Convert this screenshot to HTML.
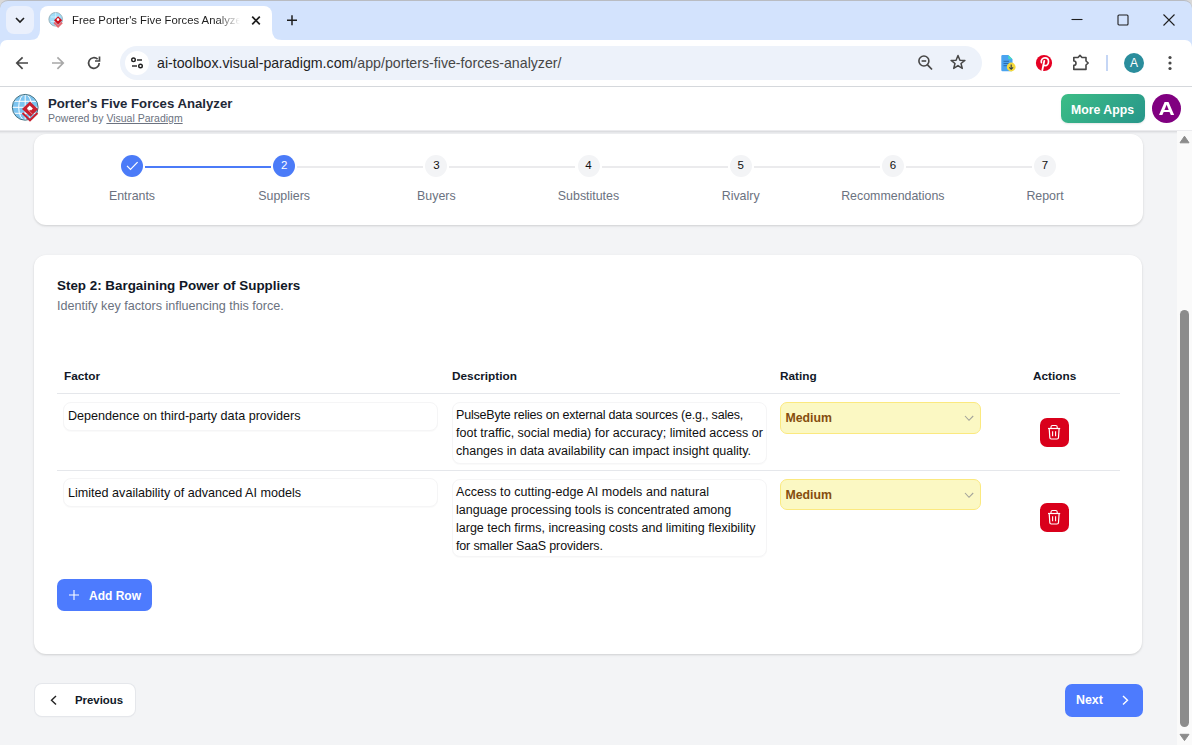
<!DOCTYPE html>
<html><head><meta charset="utf-8">
<style>
*{box-sizing:border-box;margin:0;padding:0}
html,body{width:1192px;height:745px;overflow:hidden;font-family:"Liberation Sans",sans-serif;background:#f3f4f6;position:relative}
.abs{position:absolute}
.t{position:absolute;line-height:1;white-space:nowrap}
svg{position:absolute;overflow:visible}
#tabstrip{left:0;top:0;width:1192px;height:48px;background:#d3e3fd;border-top:1px solid #b9bcc2;border-radius:8px 8px 0 0}
#corner{left:0;top:0;width:1192px;height:10px;background:#d9d9d9}
#toolbar{left:0;top:40px;width:1192px;height:46px;background:#fff;border-radius:7px 7px 0 0}
#tbline{left:0;top:86px;width:1192px;height:1px;background:#d5d8dc}
#apphdr{left:0;top:87px;width:1192px;height:43px;background:#fff}
#hdrsh{left:0;top:130px;width:1192px;height:4px;background:linear-gradient(#ebebee 0,#ebebee 1px,#dcdde0 1px,#dcdde0 2px,#e7e8eb 2px,#e7e8eb 3px,#eff0f2 3px)}
.card{background:#fff;border-radius:12px;box-shadow:0 1px 3px rgba(0,0,0,.10),0 1px 2px rgba(0,0,0,.06)}
#scroll{left:1177px;top:131px;width:15px;height:614px;background:#fafafa}
.step{position:absolute;top:155px;width:22px;height:22px;border-radius:50%}
.step.done{background:#4b7bf8}
.step.todo{background:#f3f4f6}
.snum{position:absolute;top:160.4px;width:22px;text-align:center;font-size:11.5px;line-height:1}
.slabel{position:absolute;top:189.5px;font-size:12.4px;line-height:1;color:#6b7280;text-align:center;width:160px;white-space:nowrap}
.sline{position:absolute;top:166px;height:2px;background:#ebebed}
.th{position:absolute;top:370.6px;font-size:11.8px;line-height:1;font-weight:bold;color:#111827;white-space:nowrap}
.inp{position:absolute;background:#fff;border-radius:8px;border:1px solid #f5f5f6;box-shadow:0 1px 1px rgba(0,0,0,.025)}
.ftxt{position:absolute;font-size:12.6px;line-height:1;color:#0f0f10;white-space:nowrap}
.dtxt{position:absolute;font-size:12.5px;line-height:18px;color:#0f0f10;white-space:nowrap}
.sel{position:absolute;background:#fbf8c3;border:1px solid #fbe97f;border-radius:7px}
.mtxt{position:absolute;font-size:12.3px;line-height:1;color:#854d0e;font-weight:bold;white-space:nowrap}
.del{position:absolute;width:29px;height:29px;background:#d9001b;border-radius:7px}
.hline{position:absolute;left:57px;width:1063px;height:1px;background:#e5e7eb}
</style></head><body>
<!-- Browser chrome -->
<div id="corner" class="abs"></div>
<div id="tabstrip" class="abs"></div>
<div class="abs" style="left:6px;top:6px;width:28px;height:28px;border-radius:8px;background:#eaf0fc"></div>
<svg style="left:0;top:0" width="40" height="40"><path d="M16 18 L20 22 L24 18" fill="none" stroke="#1f1f1f" stroke-width="1.6"/></svg>
<!-- active tab -->
<div class="abs" style="left:40px;top:6px;width:232px;height:34px;background:#fff;border-radius:8px 8px 0 0"></div>
<svg style="left:30px;top:30px" width="10" height="10"><path d="M0 10 Q10 10 10 0 L10 10 Z" fill="#fff"/></svg>
<svg style="left:272px;top:30px" width="10" height="10"><path d="M0 0 Q0 10 10 10 L0 10 Z" fill="#fff"/></svg>
<svg style="left:46px;top:10px" width="20" height="20"><circle cx="9.7" cy="9.3" r="6.8" fill="#9fdcf8" stroke="#9ab3bd" stroke-width="1"/><path d="M5 7 H14 M5 11.5 H11 M9.7 2.5 V16" stroke="#d8f1fc" stroke-width=".8"/><path d="M8.2 12.5 L12.1 16.5 L16 12.5" fill="none" stroke="#e36a73" stroke-width="2.2"/><path d="M12.1 6.3 L16.2 10.3 L12.1 14.4 L8 10.3 Z" fill="#d0101e"/><circle cx="12" cy="9.6" r="1.3" fill="#fff"/></svg>
<div class="t" style="left:72px;top:15.4px;font-size:11.3px;color:#1f1f1f;width:172px;overflow:hidden;-webkit-mask-image:linear-gradient(90deg,#000 145px,transparent 168px)">Free Porter's Five Forces Analyzer</div>
<svg style="left:250px;top:14px" width="12" height="12"><path d="M2.2 2.7 L9.8 10.3 M9.8 2.7 L2.2 10.3" stroke="#1f1f1f" stroke-width="1.7"/></svg>
<svg style="left:285px;top:13px" width="14" height="14"><path d="M7 2.3 V12.3 M2 7.3 H12" stroke="#1f1f1f" stroke-width="1.5"/></svg>
<!-- window controls -->
<svg style="left:1071px;top:14px" width="12" height="12"><path d="M0.5 5.5 H11.5" stroke="#1f1f1f" stroke-width="1.1"/></svg>
<svg style="left:1117px;top:14px" width="12" height="12"><rect x="1" y="1" width="10" height="10" fill="none" stroke="#1f1f1f" stroke-width="1.1" rx="1"/></svg>
<svg style="left:1163px;top:14px" width="12" height="12"><path d="M0.5 0.5 L11.5 11.5 M11.5 0.5 L0.5 11.5" stroke="#1f1f1f" stroke-width="1.1"/></svg>

<div id="toolbar" class="abs"></div>
<div id="tbline" class="abs"></div>
<!-- nav icons -->
<svg style="left:14px;top:55px" width="16" height="16"><path d="M14 8 H2.8 M8.6 2.3 L2.8 8 L8.6 13.8" fill="none" stroke="#474747" stroke-width="1.7"/></svg>
<svg style="left:50px;top:55px" width="16" height="16"><path d="M2 8 H13.2 M7.4 2.3 L13.2 8 L7.4 13.8" fill="none" stroke="#a8a8a8" stroke-width="1.7"/></svg>
<svg style="left:86px;top:55px" width="16" height="16"><path d="M13.2 8 A5.3 5.3 0 1 1 11.6 4.2" fill="none" stroke="#474747" stroke-width="1.7"/><path d="M13.5 1.5 V6 H9" fill="none" stroke="#474747" stroke-width="1.7"/></svg>
<!-- omnibox -->
<div class="abs" style="left:120px;top:46px;width:862px;height:34px;border-radius:17px;background:#edf2fa"></div>
<div class="abs" style="left:125px;top:51px;width:24px;height:24px;border-radius:12px;background:#fff"></div>
<svg style="left:125px;top:51px" width="24" height="24"><circle cx="8.5" cy="8.8" r="1.8" fill="none" stroke="#1f1f1f" stroke-width="1.4"/><path d="M12 9 H17" stroke="#1f1f1f" stroke-width="1.4"/><circle cx="15.5" cy="15" r="1.8" fill="none" stroke="#1f1f1f" stroke-width="1.4"/><path d="M7 15 H12" stroke="#1f1f1f" stroke-width="1.4"/></svg>
<div class="t" style="left:157px;top:55.7px;font-size:14.2px;color:#1f1f1f">ai-toolbox.visual-paradigm.com<span style="color:#474747">/app/porters-five-forces-analyzer/</span></div>
<svg style="left:916px;top:54px" width="18" height="18"><circle cx="7.9" cy="7" r="5" fill="none" stroke="#474747" stroke-width="1.6"/><path d="M5.6 7 H10.2" stroke="#474747" stroke-width="1.6"/><path d="M11.5 10.8 L16 15.5" stroke="#474747" stroke-width="1.8"/></svg>
<svg style="left:949px;top:53px" width="18" height="18"><path d="M9 2.5 L10.9 7.2 L15.9 7.4 L12 10.5 L13.3 15.4 L9 12.6 L4.7 15.4 L6 10.5 L2.1 7.4 L7.1 7.2 Z" fill="none" stroke="#474747" stroke-width="1.5" stroke-linejoin="round"/></svg>
<!-- extensions -->
<svg style="left:999.5px;top:53px" width="20" height="20"><path d="M2.5 2 H8.3 L12.5 6.2 V17 A1.2 1.2 0 0 1 11.3 18.2 H2.5 A1.2 1.2 0 0 1 1.3 17 V3.2 A1.2 1.2 0 0 1 2.5 2 Z" fill="#4aa3f0"/><path d="M8.3 2 L12.5 6.2 H8.3 Z" fill="#45dcc3"/><path d="M3.5 8.3 H9 M3.5 10.5 H9 M3.5 12.7 H7" stroke="#2b6cb0" stroke-width="1"/><circle cx="11.2" cy="14" r="4.4" fill="#f5d93a"/><path d="M11.2 11.6 V16.2 M9.3 14.4 L11.2 16.3 L13.1 14.4" fill="none" stroke="#2d3b4a" stroke-width="1.1"/></svg>
<svg style="left:1034px;top:53px" width="20" height="20"><circle cx="10" cy="10" r="8.1" fill="#e60023"/><path d="M7.4 9.6 C6.6 7 8.6 4.9 11 4.9 C13.2 4.9 14.5 6.4 14.5 8.5 C14.5 10.9 13.1 12.7 11.1 12.7 C10.2 12.7 9.5 12.1 9.5 12.1" fill="none" stroke="#fff" stroke-width="1.7" stroke-linecap="round"/><path d="M10.3 7.8 L8.3 17.2" fill="none" stroke="#fff" stroke-width="1.8" stroke-linecap="round"/></svg>
<svg style="left:1070px;top:53px" width="20" height="20"><path d="M3.8 4.5 H8 L10 2.4 L12 4.5 H16 V8 L18.2 10 L16 12 V16.4 H3.8 V12.4 A2.2 2.2 0 0 0 3.8 8 Z" fill="none" stroke="#474747" stroke-width="1.6" stroke-linejoin="round"/></svg>
<div class="abs" style="left:1106px;top:55px;width:2px;height:16px;background:#c5d6f5"></div>
<div class="abs" style="left:1124px;top:53px;width:20px;height:20px;border-radius:50%;background:#2a8d9c;color:#fff;font-size:12px;text-align:center;line-height:20px">A</div>
<svg style="left:1162px;top:53px" width="16" height="20"><circle cx="8" cy="4.5" r="1.6" fill="#474747"/><circle cx="8" cy="10" r="1.6" fill="#474747"/><circle cx="8" cy="15.5" r="1.6" fill="#474747"/></svg>

<!-- app header -->
<div id="apphdr" class="abs"></div>
<div id="hdrsh" class="abs"></div>
<svg style="left:10px;top:92px" width="32" height="32"><defs><clipPath id="gc"><circle cx="15.2" cy="15.3" r="12.6"/></clipPath></defs><circle cx="15.2" cy="15.3" r="12.6" fill="#7cc4f0"/><g clip-path="url(#gc)" stroke="#fff" stroke-width="1" fill="none"><path d="M15.2 2 V29 M2 15.3 H29 M2 9.3 H29 M2 21.3 H29"/><ellipse cx="15.2" cy="15.3" rx="6.5" ry="13"/></g><circle cx="15.2" cy="15.3" r="12.9" fill="none" stroke="#3f6f80" stroke-width="1"/><path d="M20 9.5 L28 17.2 L20.5 24.7 L12 17 Z" fill="#c8202f"/><path d="M19.7 13.4 L22.9 16.6 L21 18.5 L20.2 17.7 L19.2 18.7 L16.9 16.3 Z" fill="#fff"/><path d="M17.4 17.2 L22.6 22.4" stroke="#f3c9cc" stroke-width=".6"/><path d="M12.5 21 L20 28.3 L27.5 21" fill="none" stroke="#c8202f" stroke-width="2"/></svg>
<div class="t" style="left:48px;top:96.8px;font-size:13.2px;font-weight:bold;color:#1f2937">Porter's Five Forces Analyzer</div>
<div class="t" style="left:48px;top:112.9px;font-size:10.5px;color:#6b7280">Powered by <span style="text-decoration:underline">Visual Paradigm</span></div>
<div class="abs" style="left:1061px;top:94px;width:84px;height:29px;border-radius:7px;background:linear-gradient(135deg,#3cbd86,#27968a);box-shadow:0 1px 2px rgba(0,0,0,.1)"></div>
<div class="t" style="left:1071px;top:103.8px;font-size:12.3px;font-weight:bold;color:#fff">More Apps</div>
<div class="abs" style="left:1152px;top:94px;width:29px;height:29px;border-radius:50%;background:#800080"></div>
<div class="t" style="left:1152px;top:99px;width:29px;text-align:center;font-size:19px;font-weight:bold;color:#fff;transform:scaleX(1.18)">A</div>

<div id="scroll" class="abs"></div>
<svg style="left:1177px;top:131px" width="15" height="20"><path d="M3 11.8 L7.5 5.2 L12 11.8 Z" fill="#8b8b8b" stroke="#8b8b8b" stroke-width="1" stroke-linejoin="round"/></svg>
<div class="abs" style="left:1180px;top:310px;width:9px;height:417px;border-radius:4.5px;background:#8c8c8c"></div>
<svg style="left:1177px;top:728px" width="15" height="17"><path d="M3 6.3 L7.5 12.6 L12 6.3 Z" fill="#8b8b8b" stroke="#8b8b8b" stroke-width="1" stroke-linejoin="round"/></svg>

<!-- stepper card -->
<div class="abs card" style="left:34px;top:134px;width:1109px;height:91px"></div>
<div class="sline" style="left:145.00px;width:126.17px;background:#4b7bf8"></div>
<div class="sline" style="left:297.17px;width:126.17px"></div>
<div class="sline" style="left:449.33px;width:126.17px"></div>
<div class="sline" style="left:601.50px;width:126.17px"></div>
<div class="sline" style="left:753.67px;width:126.17px"></div>
<div class="sline" style="left:905.83px;width:126.17px"></div>
<div class="step done" style="left:121.00px"><svg style="left:0;top:0" width="22" height="22"><path d="M6 10.8 L9.5 14.4 L16.6 7.2" fill="none" stroke="#fff" stroke-width="1.2"/></svg></div>
<div class="step done" style="left:273.17px"></div>
<div class="step todo" style="left:425.33px"></div>
<div class="step todo" style="left:577.50px"></div>
<div class="step todo" style="left:729.67px"></div>
<div class="step todo" style="left:881.83px"></div>
<div class="step todo" style="left:1034.00px"></div>
<div class="snum" style="left:273.17px;color:#fff">2</div>
<div class="snum" style="left:425.33px;color:#111">3</div>
<div class="snum" style="left:577.50px;color:#111">4</div>
<div class="snum" style="left:729.67px;color:#111">5</div>
<div class="snum" style="left:881.83px;color:#111">6</div>
<div class="snum" style="left:1034.00px;color:#111">7</div>
<div class="slabel" style="left:52.00px">Entrants</div>
<div class="slabel" style="left:204.17px">Suppliers</div>
<div class="slabel" style="left:356.33px">Buyers</div>
<div class="slabel" style="left:508.50px">Substitutes</div>
<div class="slabel" style="left:660.67px">Rivalry</div>
<div class="slabel" style="left:812.83px">Recommendations</div>
<div class="slabel" style="left:965.00px">Report</div>

<!-- main card -->
<div class="abs card" style="left:34px;top:255px;width:1108px;height:399px"></div>
<div class="t" style="left:57px;top:278.7px;font-size:13.4px;font-weight:bold;color:#111827">Step 2: Bargaining Power of Suppliers</div>
<div class="t" style="left:57px;top:299.9px;font-size:12.6px;color:#6b7280">Identify key factors influencing this force.</div>
<div class="th" style="left:64px">Factor</div>
<div class="th" style="left:452px">Description</div>
<div class="th" style="left:780px">Rating</div>
<div class="th" style="left:1033px">Actions</div>
<div class="hline" style="top:393px"></div>
<div class="hline" style="top:470px"></div>

<div class="inp" style="left:63px;top:402px;width:375px;height:29px"></div>
<div class="ftxt" style="left:68px;top:410.2px">Dependence on third-party data providers</div>
<div class="inp" style="left:451.5px;top:402px;width:315px;height:62px"></div>
<div class="dtxt" style="left:456px;top:406px"><span style="letter-spacing:-0.2px">PulseByte relies on external data sources (e.g., sales,</span><br>foot traffic, social media) for accuracy; limited access or<br>changes in data availability can impact insight quality.</div>
<div class="sel" style="left:780px;top:402px;width:201px;height:32px"></div>
<div class="mtxt" style="left:785.5px;top:412.3px">Medium</div>
<svg style="left:963px;top:413px" width="12" height="10"><path d="M2 3 L6 7.3 L10.2 3" fill="none" stroke="#a3a39a" stroke-width="1.1"/></svg>
<div class="del" style="left:1040px;top:418px"><svg style="left:0;top:0" width="29" height="29"><path d="M8 10.5 H20.2" stroke="#fff" stroke-width="1.2"/><path d="M11 10.5 V9 A1.5 1.5 0 0 1 12.5 7.5 H15.7 A1.5 1.5 0 0 1 17.2 9 V10.5" fill="none" stroke="#fff" stroke-width="1.1"/><path d="M9.2 10.5 L9.8 19.5 A1.5 1.5 0 0 0 11.3 21 H17 A1.5 1.5 0 0 0 18.5 19.5 L19.1 10.5" fill="none" stroke="#fff" stroke-width="1.2"/><path d="M12.6 13.3 V18.2 M15.6 13.3 V18.2" stroke="#fff" stroke-width="1.1"/></svg></div>

<div class="inp" style="left:63px;top:478px;width:375px;height:29px"></div>
<div class="ftxt" style="left:68px;top:487.2px">Limited availability of advanced AI models</div>
<div class="inp" style="left:451.5px;top:478.5px;width:315px;height:78.5px"></div>
<div class="dtxt" style="left:456px;top:483px"><span style="letter-spacing:0.05px">Access to cutting-edge AI models and natural</span><br>language processing tools is concentrated among<br>large tech firms, increasing costs and limiting flexibility<br><span style="letter-spacing:-0.15px">for smaller SaaS providers.</span></div>
<div class="sel" style="left:780px;top:478.5px;width:201px;height:31.5px"></div>
<div class="mtxt" style="left:785.5px;top:489.3px">Medium</div>
<svg style="left:963px;top:490px" width="12" height="10"><path d="M2 3 L6 7.3 L10.2 3" fill="none" stroke="#a3a39a" stroke-width="1.1"/></svg>
<div class="del" style="left:1040px;top:503px"><svg style="left:0;top:0" width="29" height="29"><path d="M8 10.5 H20.2" stroke="#fff" stroke-width="1.2"/><path d="M11 10.5 V9 A1.5 1.5 0 0 1 12.5 7.5 H15.7 A1.5 1.5 0 0 1 17.2 9 V10.5" fill="none" stroke="#fff" stroke-width="1.1"/><path d="M9.2 10.5 L9.8 19.5 A1.5 1.5 0 0 0 11.3 21 H17 A1.5 1.5 0 0 0 18.5 19.5 L19.1 10.5" fill="none" stroke="#fff" stroke-width="1.2"/><path d="M12.6 13.3 V18.2 M15.6 13.3 V18.2" stroke="#fff" stroke-width="1.1"/></svg></div>

<div class="abs" style="left:57px;top:579px;width:95px;height:32px;border-radius:7px;background:#4d7bfe"></div>
<svg style="left:69px;top:590px" width="10" height="10"><path d="M5 0 V10 M0 5 H10" stroke="#fff" stroke-width="1.1"/></svg>
<div class="t" style="left:89px;top:589.8px;font-size:12px;font-weight:bold;color:#fff">Add Row</div>

<div class="abs" style="left:34.5px;top:684px;width:100px;height:32px;border-radius:7px;background:#fff;box-shadow:0 0 0 1px #e5e7eb,0 1px 2px rgba(0,0,0,.05)"></div>
<svg style="left:50px;top:695px" width="8" height="11"><path d="M6 1 L1.5 5.3 L6 9.6" fill="none" stroke="#222" stroke-width="1.4"/></svg>
<div class="t" style="left:75px;top:695.1px;font-size:11.4px;font-weight:bold;color:#111827">Previous</div>
<div class="abs" style="left:1065px;top:684px;width:78px;height:33px;border-radius:7px;background:#4d7bfe"></div>
<div class="t" style="left:1076px;top:694.3px;font-size:12.4px;font-weight:bold;color:#fff">Next</div>
<svg style="left:1121px;top:695px" width="8" height="11"><path d="M2 1 L6.5 5.3 L2 9.6" fill="none" stroke="#fff" stroke-width="1.4"/></svg>
</body></html>
